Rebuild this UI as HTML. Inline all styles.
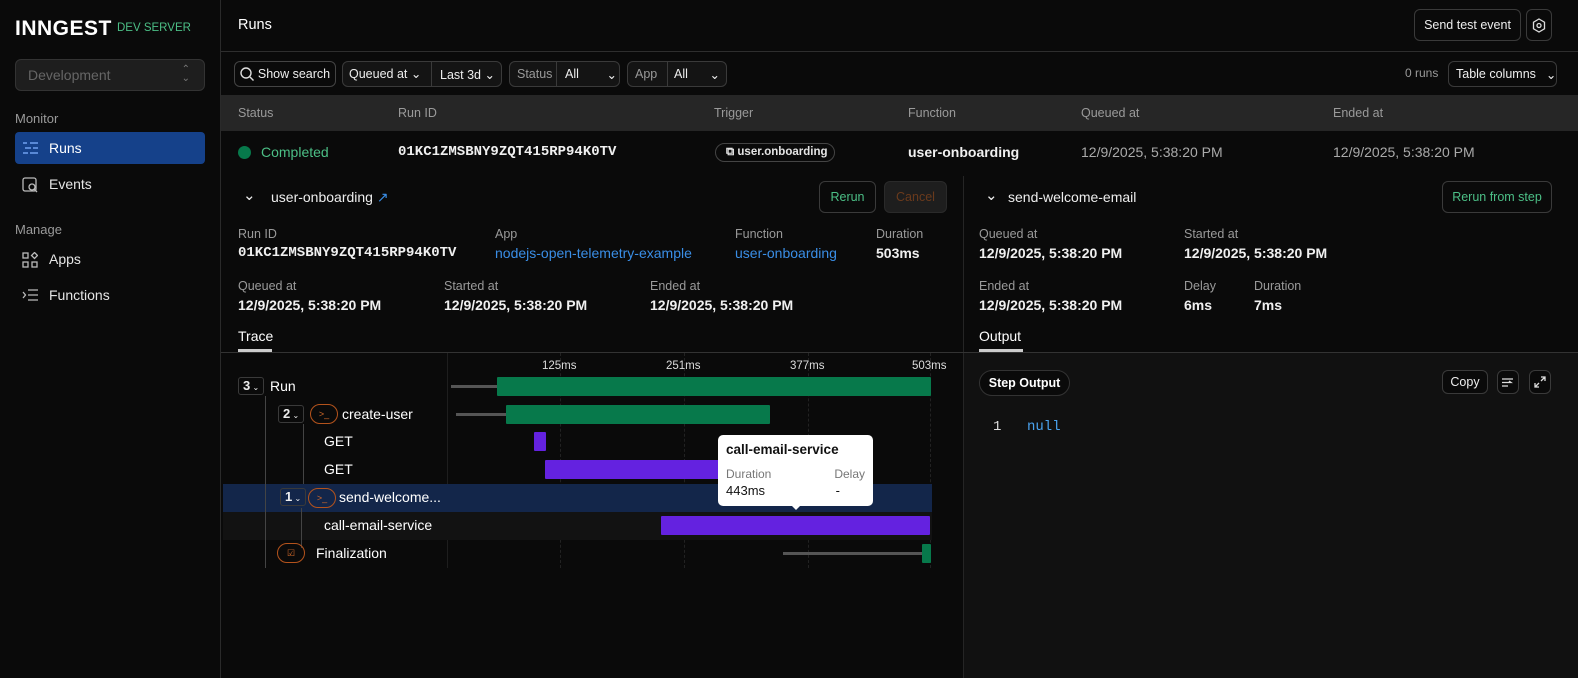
<!DOCTYPE html>
<html><head><meta charset="utf-8"><style>
*{box-sizing:border-box;margin:0;padding:0}
body{width:1578px;height:678px;background:#0a0a0a;color:#e5e5e5;font-family:"Liberation Sans",sans-serif;font-size:14px;position:relative;overflow:hidden}
.a{position:absolute;white-space:nowrap}
.lbl{color:#9a9a9a;font-size:12.5px}
.val{color:#f0f0f0;font-size:14px;font-weight:bold}
.mono{font-family:"Liberation Mono",monospace}
.btn{position:absolute;border:1px solid #3a3a3a;border-radius:6px;font-size:12.5px;color:#eee;display:flex;align-items:center;justify-content:center;white-space:nowrap}
.bar{position:absolute;height:19px;border-radius:1px}
.g{background:#07794b}.p{background:#6422e0}
.line{position:absolute;height:3px;background:#555}
.tick{position:absolute;top:353px;bottom:110px;width:1px;border-left:1px dashed #222}
.cnt{position:absolute;width:26px;height:18px;border:1px solid #3a3a3a;border-radius:3px;font-size:13px;font-weight:bold;color:#eee;padding-left:4px;line-height:16px}
.ico{position:absolute;width:28px;height:20px;border:1px solid #b4531c;border-radius:10px;color:#d36a2a;font-size:9px;text-align:center;line-height:18px}
</style></head><body>
<!-- sidebar -->
<div class="a" style="left:0;top:0;width:221px;height:678px;border-right:1px solid #2a2a2a"></div>
<div class="a" style="left:15px;top:17px;font-size:21px;font-weight:bold;color:#fff;letter-spacing:0.5px">INNGEST</div>
<div class="a" style="left:117px;top:22px;font-size:11.5px;color:#4cbf86">DEV SERVER</div>
<div class="a" style="left:15px;top:59px;width:190px;height:32px;background:#1e1e1e;border:1px solid #333;border-radius:6px;color:#666;font-size:14px;padding:7px 12px">Development<span style="position:absolute;right:14px;top:5px;font-size:10px;line-height:9px;color:#777">⌃<br>⌄</span></div>
<div class="a lbl" style="left:15px;top:111px;font-size:13px">Monitor</div>
<div class="a" style="left:15px;top:132px;width:190px;height:32px;background:#15418a;border-radius:4px"></div>
<svg class="a" style="left:22px;top:140px" width="18" height="16" stroke="#6fa0ef" stroke-width="1.4" fill="none"><path d="M1 3h4M8 3h8M3 8h6M11 8h5M1 13h5M8 13h8"/></svg>
<div class="a" style="left:49px;top:140px;color:#fff">Runs</div>
<svg class="a" style="left:22px;top:176px" width="17" height="17" stroke="#bbb" stroke-width="1.3" fill="none"><rect x="1" y="2" width="13" height="13" rx="2"/><circle cx="10" cy="11" r="3"/><path d="M12 13l3 3"/></svg>
<div class="a" style="left:49px;top:176px">Events</div>
<div class="a lbl" style="left:15px;top:222px;font-size:13px">Manage</div>
<svg class="a" style="left:22px;top:252px" width="16" height="16" stroke="#bbb" stroke-width="1.3" fill="none"><rect x="1" y="1" width="5" height="5"/><rect x="1" y="10" width="5" height="5"/><rect x="10" y="10" width="5" height="5"/><path d="M12.5 0.5l3 3-3 3-3-3z"/></svg>
<div class="a" style="left:49px;top:251px">Apps</div>
<svg class="a" style="left:22px;top:288px" width="17" height="14" stroke="#bbb" stroke-width="1.3" fill="none"><path d="M1 4l2.5 3L1 10M6 2h10M6 7h10M6 12h10"/></svg>
<div class="a" style="left:49px;top:287px">Functions</div>

<!-- header -->
<div class="a" style="left:238px;top:17px;color:#fff;font-size:14.5px">Runs</div>
<div class="a" style="left:221px;top:51px;width:1357px;height:1px;background:#2e2e2e"></div>
<div class="btn" style="left:1414px;top:9px;width:107px;height:32px">Send test event</div>
<div class="btn" style="left:1526px;top:9px;width:26px;height:32px"><svg width="14" height="15" stroke="#ddd" stroke-width="1.3" fill="none"><path d="M7 1l5.5 3.2v6.6L7 14 1.5 10.8V4.2z"/><circle cx="7" cy="7.5" r="2"/></svg></div>

<!-- filters -->
<div class="btn" style="left:234px;top:61px;width:102px;height:26px;border-color:#444"><svg width="14" height="14" stroke="#ddd" stroke-width="1.4" fill="none" style="margin-right:4px"><circle cx="6" cy="6" r="5"/><path d="M10 10l3.5 3.5"/></svg>Show search</div>
<div class="btn" style="left:342px;top:61px;width:160px;height:26px;background:#141414;justify-content:flex-start"><span style="padding-left:6px;width:89px;border-right:1px solid #3a3a3a;line-height:24px">Queued at ⌄</span><span style="padding-left:8px">Last 3d ⌄</span></div>
<div class="btn" style="left:509px;top:61px;width:111px;height:26px;background:#141414;justify-content:flex-start"><span style="padding-left:7px;width:47px;border-right:1px solid #3a3a3a;line-height:24px;color:#999">Status</span><span style="padding-left:8px;width:60px">All <span style="float:right">⌄</span></span></div>
<div class="btn" style="left:627px;top:61px;width:100px;height:26px;background:#141414;justify-content:flex-start"><span style="padding-left:7px;width:40px;border-right:1px solid #3a3a3a;line-height:24px;color:#999">App</span><span style="padding-left:6px;width:52px">All <span style="float:right">⌄</span></span></div>
<div class="a lbl" style="left:1405px;top:66px;font-size:12px">0 runs</div>
<div class="btn" style="left:1448px;top:61px;width:109px;height:26px;justify-content:flex-start;padding-left:7px">Table columns <span style="margin-left:10px">⌄</span></div>

<!-- table -->
<div class="a" style="left:221px;top:95px;width:1357px;height:36px;background:#262626"></div>
<div class="a lbl" style="left:238px;top:106px">Status</div>
<div class="a lbl" style="left:398px;top:106px">Run ID</div>
<div class="a lbl" style="left:714px;top:106px">Trigger</div>
<div class="a lbl" style="left:908px;top:106px">Function</div>
<div class="a lbl" style="left:1081px;top:106px">Queued at</div>
<div class="a lbl" style="left:1333px;top:106px">Ended at</div>
<div class="a" style="left:238px;top:146px;width:13px;height:13px;border-radius:50%;background:#07794b"></div>
<div class="a" style="left:261px;top:144px;color:#4cbf86">Completed</div>
<div class="a mono val" style="left:398px;top:144px">01KC1ZMSBNY9ZQT415RP94K0TV</div>
<div class="a" style="left:715px;top:143px;width:120px;height:19px;border:1px solid #444;border-radius:10px;font-size:11.5px;font-weight:bold;padding:2px 0 0 10px">⧉ user.onboarding</div>
<div class="a val" style="left:908px;top:144px">user-onboarding</div>
<div class="a" style="left:1081px;top:144px;color:#aaa">12/9/2025, 5:38:20 PM</div>
<div class="a" style="left:1333px;top:144px;color:#aaa">12/9/2025, 5:38:20 PM</div>

<!-- left detail -->
<div class="a" style="left:963px;top:176px;width:1px;height:502px;background:#252525"></div>
<div class="a" style="left:243px;top:186px;font-size:15px;color:#eee">⌄</div>
<div class="a" style="left:271px;top:189px;color:#eee">user-onboarding <span style="color:#3a8ee6">↗</span></div>
<div class="btn" style="left:819px;top:181px;width:57px;height:32px;color:#4cbf86">Rerun</div>
<div class="btn" style="left:884px;top:181px;width:63px;height:32px;background:#1e1e1e;border-color:#2a2a2a;color:#6a3a1c">Cancel</div>
<div class="a lbl" style="left:238px;top:227px">Run ID</div>
<div class="a val mono" style="left:238px;top:245px">01KC1ZMSBNY9ZQT415RP94K0TV</div>
<div class="a lbl" style="left:495px;top:227px">App</div>
<div class="a" style="left:495px;top:245px;color:#3a8ee6">nodejs-open-telemetry-example</div>
<div class="a lbl" style="left:735px;top:227px">Function</div>
<div class="a" style="left:735px;top:245px;color:#3a8ee6">user-onboarding</div>
<div class="a lbl" style="left:876px;top:227px">Duration</div>
<div class="a val" style="left:876px;top:245px">503ms</div>
<div class="a lbl" style="left:238px;top:279px">Queued at</div>
<div class="a val" style="left:238px;top:297px">12/9/2025, 5:38:20 PM</div>
<div class="a lbl" style="left:444px;top:279px">Started at</div>
<div class="a val" style="left:444px;top:297px">12/9/2025, 5:38:20 PM</div>
<div class="a lbl" style="left:650px;top:279px">Ended at</div>
<div class="a val" style="left:650px;top:297px">12/9/2025, 5:38:20 PM</div>
<div class="a" style="left:238px;top:328px;color:#fff">Trace</div>
<div class="a" style="left:238px;top:349px;width:34px;height:3px;background:#ccc"></div>
<div class="a" style="left:221px;top:352px;width:1357px;height:1px;background:#333"></div>

<!-- trace -->
<div class="a" style="left:964px;top:353px;width:614px;height:325px;background:#111"></div>
<div class="tick" style="left:560px"></div><div class="tick" style="left:684px"></div><div class="tick" style="left:808px"></div><div class="tick" style="left:930px"></div>
<div class="a" style="left:447px;top:353px;width:1px;height:215px;background:#1e1e1e"></div>
<div class="a" style="left:542px;top:360px;font-size:11.5px;color:#ddd">125ms</div>
<div class="a" style="left:666px;top:360px;font-size:11.5px;color:#ddd">251ms</div>
<div class="a" style="left:790px;top:360px;font-size:11.5px;color:#ddd">377ms</div>
<div class="a" style="left:912px;top:360px;font-size:11.5px;color:#ddd">503ms</div>
<div class="a" style="left:223px;top:484px;width:709px;height:28px;background:#13264a"></div>
<div class="a" style="left:223px;top:512px;width:709px;height:28px;background:#121212"></div>
<div class="a" style="left:265px;top:396px;width:1px;height:172px;background:#444"></div>
<div class="a" style="left:303px;top:424px;width:1px;height:60px;background:#444"></div>
<div class="a" style="left:301px;top:508px;width:1px;height:40px;background:#444"></div>

<div class="cnt" style="left:238px;top:377px">3<span style="font-size:8px;font-weight:normal"> ⌄</span></div>
<div class="a" style="left:270px;top:378px;color:#fff">Run</div>
<div class="cnt" style="left:278px;top:405px">2<span style="font-size:8px;font-weight:normal"> ⌄</span></div>
<div class="ico" style="left:310px;top:404px">&gt;_</div>
<div class="a" style="left:342px;top:406px;color:#fff">create-user</div>
<div class="a" style="left:324px;top:433px;color:#fff">GET</div>
<div class="a" style="left:324px;top:461px;color:#fff">GET</div>
<div class="cnt" style="left:280px;top:488px">1<span style="font-size:8px;font-weight:normal"> ⌄</span></div>
<div class="ico" style="left:308px;top:488px">&gt;_</div>
<div class="a" style="left:339px;top:489px;color:#fff">send-welcome...</div>
<div class="a" style="left:324px;top:517px;color:#fff">call-email-service</div>
<div class="ico" style="left:277px;top:543px">☑</div>
<div class="a" style="left:316px;top:545px;color:#fff">Finalization</div>

<div class="line" style="left:451px;top:385px;width:46px"></div>
<div class="bar g" style="left:497px;top:377px;width:434px"></div>
<div class="line" style="left:456px;top:413px;width:50px"></div>
<div class="bar g" style="left:506px;top:405px;width:264px"></div>
<div class="bar p" style="left:534px;top:432px;width:12px"></div>
<div class="bar p" style="left:545px;top:460px;width:235px"></div>
<div class="bar p" style="left:661px;top:516px;width:269px"></div>
<div class="line" style="left:783px;top:552px;width:140px"></div>
<div class="bar g" style="left:922px;top:544px;width:9px"></div>

<div class="a" style="left:718px;top:435px;width:155px;height:71px;background:#fff;border-radius:5px;color:#111;padding:7px 8px">
<div style="font-weight:bold;font-size:13.5px">call-email-service</div>
<div style="margin-top:10px;font-size:12px;color:#777">Duration<span style="float:right">Delay</span></div>
<div style="margin-top:2px;font-size:13px">443ms<span style="float:right;margin-right:25px">-</span></div>
</div>
<div class="a" style="left:791px;top:505px;width:0;height:0;border-left:5px solid transparent;border-right:5px solid transparent;border-top:5px solid #fff"></div>

<!-- right detail -->
<div class="a" style="left:985px;top:186px;font-size:15px;color:#eee">⌄</div>
<div class="a" style="left:1008px;top:189px;color:#eee">send-welcome-email</div>
<div class="btn" style="left:1442px;top:181px;width:110px;height:32px;color:#4cbf86">Rerun from step</div>
<div class="a lbl" style="left:979px;top:227px">Queued at</div>
<div class="a val" style="left:979px;top:245px">12/9/2025, 5:38:20 PM</div>
<div class="a lbl" style="left:1184px;top:227px">Started at</div>
<div class="a val" style="left:1184px;top:245px">12/9/2025, 5:38:20 PM</div>
<div class="a lbl" style="left:979px;top:279px">Ended at</div>
<div class="a val" style="left:979px;top:297px">12/9/2025, 5:38:20 PM</div>
<div class="a lbl" style="left:1184px;top:279px">Delay</div>
<div class="a val" style="left:1184px;top:297px">6ms</div>
<div class="a lbl" style="left:1254px;top:279px">Duration</div>
<div class="a val" style="left:1254px;top:297px">7ms</div>
<div class="a" style="left:979px;top:328px;color:#fff">Output</div>
<div class="a" style="left:979px;top:349px;width:44px;height:3px;background:#ccc"></div>
<div class="a" style="left:979px;top:370px;width:91px;height:26px;border:1px solid #333;border-radius:13px;background:#0a0a0a;font-size:12.5px;font-weight:bold;color:#fff;text-align:center;line-height:24px">Step Output</div>
<div class="btn" style="left:1442px;top:370px;width:46px;height:24px;background:#0a0a0a">Copy</div>
<div class="btn" style="left:1497px;top:370px;width:22px;height:24px;background:#0a0a0a"><svg width="12" height="11" stroke="#ddd" stroke-width="1.3" fill="none"><path d="M0 2h11M0 5.5h9l-2-1.5M0 9h6"/></svg></div>
<div class="btn" style="left:1529px;top:370px;width:22px;height:24px;background:#0a0a0a"><svg width="12" height="12" stroke="#ddd" stroke-width="1.3" fill="none"><path d="M7 1h4v4M11 1L7 5M5 11H1V7M1 11l4-4"/></svg></div>
<div class="a mono" style="left:993px;top:419px;color:#ddd">1</div>
<div class="a mono" style="left:1027px;top:419px;color:#4aa3f0">null</div>
</body></html>
